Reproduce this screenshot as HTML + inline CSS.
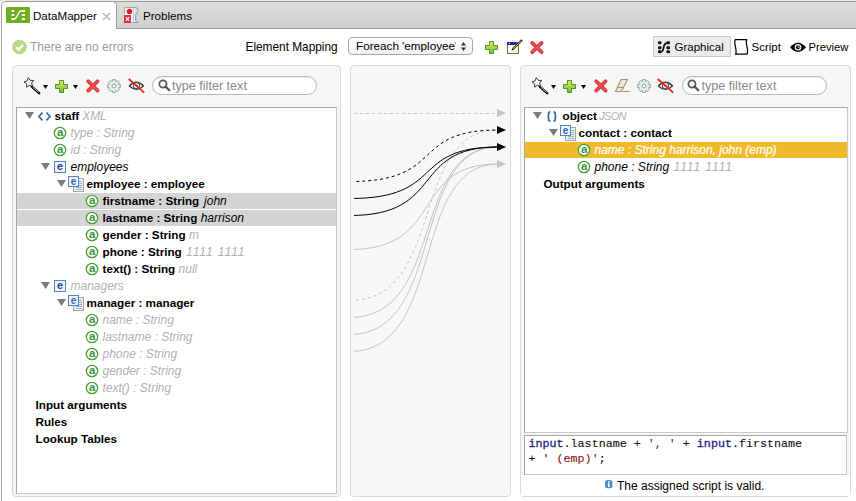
<!DOCTYPE html>
<html><head><meta charset="utf-8">
<style>
*{margin:0;padding:0;box-sizing:border-box}
html,body{width:856px;height:501px;overflow:hidden;background:#fff;font-family:"Liberation Sans",sans-serif;color:#000}
.a{position:absolute}
.t{position:absolute;white-space:pre;font-size:11.7px;line-height:17px}
.b{font-weight:bold}
.i{font-style:italic;font-size:12px}
.g{color:#b0b0b0}
svg{position:absolute;overflow:visible}
</style></head><body>

<!-- tab bar -->
<div class="a" style="left:0;top:0;width:856px;height:1px;background:#ececec"></div>
<div class="a" style="left:6px;top:1px;width:850px;height:28px;background:linear-gradient(#dedede,#cfcfcf);border-top:1px solid #9c9c9c;border-bottom:1px solid #9c9c9c"></div>
<!-- active tab -->
<div class="a" style="left:1px;top:1px;width:116px;height:28px;background:#fff;border:1px solid #9c9c9c;border-bottom:none;border-radius:5px 5px 0 0"></div>
<!-- window left border -->
<div class="a" style="left:1px;top:20px;width:1px;height:481px;background:#a4a4a4"></div>


<!-- DataMapper icon -->
<svg style="left:6px;top:7px" width="24" height="16" viewBox="0 0 24 16">
<rect x="0" y="0" width="24" height="16" rx="1.2" fill="#6db01f"/>
<g fill="#fff"><rect x="5.5" y="3" width="2.8" height="2" rx="0.6"/><rect x="5.5" y="7" width="2.8" height="2" rx="0.6"/><rect x="5.5" y="11" width="2.8" height="2" rx="0.6"/>
<rect x="15.8" y="3" width="3.2" height="2" rx="0.6"/><rect x="15.8" y="7" width="3.2" height="2" rx="0.6"/><rect x="15.8" y="11" width="3.2" height="2" rx="0.6"/></g>
<path d="M5.8 11.8 H8.3 Q9.5 11.8 10.3 10.3 L13.3 5 Q13.9 4 15.5 4 H19" stroke="#fff" stroke-width="1.4" fill="none"/>
</svg>
<div class="t" style="left:33px;top:7px;font-size:11.6px">DataMapper</div>
<svg style="left:102px;top:12px" width="9" height="9" viewBox="0 0 9 9"><path d="M1 1L8 8M8 1L1 8" stroke="#b9b9b9" stroke-width="1.6"/></svg>

<!-- Problems icon -->
<svg style="left:123px;top:6px" width="17" height="18" viewBox="0 0 17 18">
<rect x="1" y="1" width="11" height="15" fill="#eef4fb"/>
<path d="M1.5 8 V1.5 H9" stroke="#b4a878" stroke-width="1" fill="none"/>
<path d="M9 1.5 H12.5 Q15 1.5 15 4.5 Q15 7.5 12.8 8 V14.5 Q13 16.5 15.5 16.5 H9" stroke="#8898c0" stroke-width="1" fill="none"/>
<path d="M10.5 2 V16" stroke="#b8c8e4" stroke-width="1"/>
<circle cx="6.5" cy="5.5" r="2.7" fill="#e01c2c"/>
<rect x="1" y="9" width="7" height="8" fill="#de3040"/>
<path d="M2.8 11.2 L6.2 14.8 M6.2 11.2 L2.8 14.8" stroke="#fff" stroke-width="1.2"/>
</svg>
<div class="t" style="left:143px;top:7px;font-size:11.6px">Problems</div>

<!-- status row -->
<svg style="left:12px;top:40px" width="15" height="15" viewBox="0 0 15 15">
<circle cx="7.5" cy="7" r="6.8" fill="#b9da88" stroke="#a6cf7c" stroke-width="0.8"/>
<path d="M4 7.2 L6.6 9.6 L11 5" stroke="#fff" stroke-width="2.2" fill="none"/>
</svg>
<div class="t" style="left:30px;top:39px;font-size:12px;color:#9a9a9a">There are no errors</div>
<div class="t" style="left:245.5px;top:39px;font-size:11.85px">Element Mapping</div>

<!-- combo -->
<div class="a" style="left:348px;top:37px;width:125px;height:18px;border:1px solid #a9a9a9;border-radius:4px;background:linear-gradient(#ffffff,#f0f0f0)"></div>
<div class="t" style="left:356px;top:37px;font-size:11.7px;width:100px;overflow:hidden">Foreach 'employee'</div>
<svg style="left:461px;top:42px" width="5" height="9" viewBox="0 0 5 9"><path d="M0 3.5 L2.5 0 L5 3.5Z M0 5.5 L2.5 9 L5 5.5Z" fill="#333"/></svg>

<!-- plus -->
<svg style="left:485px;top:41px" width="13" height="13" viewBox="0 0 13 13">
<defs><linearGradient id="gp" x1="0" y1="0" x2="0" y2="1"><stop offset="0" stop-color="#e8ea5a"/><stop offset="1" stop-color="#6cc030"/></linearGradient></defs>
<path d="M4.5 0.5 H8.5 V4.5 H12.5 V8.5 H8.5 V12.5 H4.5 V8.5 H0.5 V4.5 H4.5Z" fill="url(#gp)" stroke="#4f9040" stroke-width="1"/>
</svg>
<!-- edit -->
<svg style="left:506px;top:39px" width="17" height="16" viewBox="0 0 17 16">
<defs><linearGradient id="tb" x1="0" y1="0" x2="1" y2="0"><stop offset="0" stop-color="#101a90"/><stop offset="0.7" stop-color="#1830a8"/><stop offset="1" stop-color="#40a0e0"/></linearGradient></defs>
<rect x="1.5" y="3.5" width="11" height="11" fill="#fbfbe4" stroke="#6a6a6a"/>
<rect x="1" y="3" width="12" height="3" fill="url(#tb)"/>
<circle cx="3.3" cy="4.5" r="0.7" fill="#fff"/>
<path d="M6.8 10.3 L15.5 1.6" stroke="#3a2a10" stroke-width="2.1" stroke-linecap="round"/>
<path d="M7.1 10 L15.2 1.9" stroke="#f0a838" stroke-width="1"/>
</svg>
<!-- red x -->
<svg style="left:530px;top:41px" width="14" height="13" viewBox="0 0 14 13">
<path d="M2.2 1.9 L11.6 11.1 M11.6 1.9 L2.2 11.1" stroke="#d83434" stroke-width="3.7" stroke-linecap="round"/>
<path d="M2.2 1.9 L11.6 11.1 M11.6 1.9 L2.2 11.1" stroke="#ea5454" stroke-width="1.6" stroke-linecap="round"/>
</svg>

<!-- Graphical button -->
<div class="a" style="left:653px;top:36px;width:78px;height:21px;background:#ebebeb;border:1px solid #c9c9c9"></div>
<svg style="left:657px;top:40px" width="14" height="14" viewBox="0 0 14 14">
<rect x="1" y="1.3" width="3.4" height="3" rx="1" fill="#111"/><rect x="1" y="6.3" width="3.4" height="3" rx="1" fill="#111"/><rect x="1" y="10.3" width="3.4" height="3" rx="1" fill="#111"/>
<rect x="9.5" y="1.3" width="3.5" height="3" rx="1" fill="#111"/><rect x="9.5" y="6.3" width="3.5" height="3" rx="1" fill="#111"/><rect x="9.5" y="10.3" width="3.5" height="3" rx="1" fill="#111"/>
<path d="M3 12 Q6 12 6.5 8 Q7.2 3 10.5 2.8" stroke="#111" stroke-width="1.8" fill="none"/>
</svg>
<div class="t" style="left:674.5px;top:39px;font-size:11.5px">Graphical</div>
<svg style="left:733px;top:38px" width="16" height="18" viewBox="0 0 16 18">
<path d="M2.3 1.6 H13.8 C11.6 5 16.4 12 14 16.2 H2.6 C4.8 12 0 5 2.3 1.6Z" fill="#fff" stroke="#000" stroke-width="1.25" stroke-linejoin="round"/>
</svg>
<div class="t" style="left:751.5px;top:39px;font-size:11.5px">Script</div>
<svg style="left:789px;top:41px" width="18" height="13" viewBox="0 0 18 13">
<path d="M1 6.3 Q9 -3 17 6.3 Q9 15.6 1 6.3Z" fill="#000"/>
<circle cx="9" cy="6.3" r="3.3" fill="#fff"/>
<circle cx="9" cy="6.3" r="2.1" fill="#000"/>
<path d="M9 6.3 V4.2 M9 6.3 H11" stroke="#fff" stroke-width="0.6"/>
</svg>
<div class="t" style="left:808.5px;top:39px;font-size:11.2px">Preview</div>

<!-- panels -->
<div class="a" style="left:12px;top:65px;width:329px;height:432px;background:#f6f6f6;border:1px solid #dadada;border-radius:4px"></div>
<div class="a" style="left:350px;top:65px;width:161px;height:432px;background:#f7f7f7;border:1px solid #dadada;border-radius:4px"></div>
<div class="a" style="left:520px;top:65px;width:331px;height:432px;background:#f6f6f6;border:1px solid #dadada;border-radius:4px"></div>


<!-- tree boxes -->
<div class="a" style="left:16px;top:107px;width:321px;height:387px;background:#fff;border:1px solid #a6a6a6;border-right-color:#c8c8c8;border-bottom-color:#c8c8c8"></div>
<div class="a" style="left:524px;top:107px;width:324px;height:326px;background:#fff;border:1px solid #a6a6a6;border-right-color:#c8c8c8;border-bottom-color:#c8c8c8"></div>
<div class="a" style="left:524px;top:435px;width:323px;height:40px;background:#fff;border:1px solid #a6a6a6;border-right-color:#c8c8c8;border-bottom-color:#c8c8c8"></div>
<div class="a" style="left:521px;top:475px;width:329px;height:21px;background:#fff"></div>

<svg style="left:24px;top:78px" width="18" height="17" viewBox="0 0 18 17"><path d="M7.8 8.6 L15.3 15.3" stroke="#000" stroke-width="2.3" stroke-linecap="round"/><path d="M8.6 9 L14.6 14.4" stroke="#fff" stroke-width="0.7"/><path d="M4.24 -0.34 L6.20 2.39 L9.56 2.42 L7.57 5.12 L8.58 8.33 L5.39 7.27 L2.65 9.23 L2.68 5.86 L-0.03 3.87 L3.17 2.85Z" fill="#fff" stroke="#222" stroke-width="0.9" stroke-linejoin="round"/></svg>
<svg style="left:43px;top:85px" width="5" height="4" viewBox="0 0 5 4"><path d="M0 0H5L2.5 4Z" fill="#000"/></svg>
<svg style="left:55px;top:80px" width="13" height="13" viewBox="0 0 13 13"><path d="M4.5 0.5 H8.5 V4.5 H12.5 V8.5 H8.5 V12.5 H4.5 V8.5 H0.5 V4.5 H4.5Z" fill="url(#gp)" stroke="#4f9040" stroke-width="1"/></svg>
<svg style="left:73px;top:85px" width="5" height="4" viewBox="0 0 5 4"><path d="M0 0H5L2.5 4Z" fill="#000"/></svg>
<svg style="left:86px;top:79px" width="14" height="14" viewBox="0 0 14 14"><path d="M2.2 2.2 L11.6 11.6 M11.6 2.2 L2.2 11.6" stroke="#d83434" stroke-width="3.7" stroke-linecap="round"/><path d="M2.2 2.2 L11.6 11.6 M11.6 2.2 L2.2 11.6" stroke="#ea5454" stroke-width="1.6" stroke-linecap="round"/></svg>
<svg style="left:107px;top:79px" width="14" height="14" viewBox="0 0 14 14"><path d="M13.46 5.62 L13.46 8.38 L11.59 8.73 L11.46 9.02 L12.54 10.59 L10.59 12.54 L9.02 11.46 L8.73 11.59 L8.38 13.46 L5.62 13.46 L5.27 11.59 L4.98 11.46 L3.41 12.54 L1.46 10.59 L2.54 9.02 L2.41 8.73 L0.54 8.38 L0.54 5.62 L2.41 5.27 L2.54 4.98 L1.46 3.41 L3.41 1.46 L4.98 2.54 L5.27 2.41 L5.62 0.54 L8.38 0.54 L8.73 2.41 L9.02 2.54 L10.59 1.46 L12.54 3.41 L11.46 4.98 L11.59 5.27Z" fill="#e2eced" stroke="#8c9c9c" stroke-width="0.9" stroke-linejoin="round"/><circle cx="7" cy="7" r="1.9" fill="#f7f7f7" stroke="#8c9c9c" stroke-width="0.9"/></svg>
<svg style="left:127.5px;top:78px" width="17" height="16" viewBox="0 0 17 16"><path d="M1.2 8 Q8.3 0.6 15.6 8" fill="none" stroke="#3a3a3a" stroke-width="1.5"/><path d="M1.2 8 Q8.3 14.6 15.6 8" fill="none" stroke="#3a3a3a" stroke-width="1.1"/><circle cx="8.4" cy="7.6" r="3.1" fill="none" stroke="#555" stroke-width="1.1"/><circle cx="8.4" cy="7.6" r="1.2" fill="#777"/><path d="M0.8 1 L16.2 14.6" stroke="#e8231d" stroke-width="1.7"/></svg>
<div class="a" style="left:152px;top:76px;width:165px;height:19px;border:1px solid #b9b9b9;border-radius:10px;background:#fff;box-shadow:inset 0 1px 1px rgba(0,0,0,0.08)"></div>
<svg style="left:157.5px;top:79px" width="13" height="13" viewBox="0 0 13 13"><circle cx="5" cy="5" r="3.6" fill="none" stroke="#555" stroke-width="1.7"/><path d="M7.6 7.6 L11.3 11.3" stroke="#555" stroke-width="2.2" stroke-linecap="round"/></svg>
<div class="t" style="left:172px;top:78px;font-size:12.6px;color:#8a8a8a">type filter text</div>
<svg style="left:532px;top:78px" width="18" height="17" viewBox="0 0 18 17"><path d="M7.8 8.6 L15.3 15.3" stroke="#000" stroke-width="2.3" stroke-linecap="round"/><path d="M8.6 9 L14.6 14.4" stroke="#fff" stroke-width="0.7"/><path d="M4.24 -0.34 L6.20 2.39 L9.56 2.42 L7.57 5.12 L8.58 8.33 L5.39 7.27 L2.65 9.23 L2.68 5.86 L-0.03 3.87 L3.17 2.85Z" fill="#fff" stroke="#222" stroke-width="0.9" stroke-linejoin="round"/></svg>
<svg style="left:551px;top:85px" width="5" height="4" viewBox="0 0 5 4"><path d="M0 0H5L2.5 4Z" fill="#000"/></svg>
<svg style="left:563px;top:80px" width="13" height="13" viewBox="0 0 13 13"><path d="M4.5 0.5 H8.5 V4.5 H12.5 V8.5 H8.5 V12.5 H4.5 V8.5 H0.5 V4.5 H4.5Z" fill="url(#gp)" stroke="#4f9040" stroke-width="1"/></svg>
<svg style="left:581px;top:85px" width="5" height="4" viewBox="0 0 5 4"><path d="M0 0H5L2.5 4Z" fill="#000"/></svg>
<svg style="left:594px;top:79px" width="14" height="14" viewBox="0 0 14 14"><path d="M2.2 2.2 L11.6 11.6 M11.6 2.2 L2.2 11.6" stroke="#d83434" stroke-width="3.7" stroke-linecap="round"/><path d="M2.2 2.2 L11.6 11.6 M11.6 2.2 L2.2 11.6" stroke="#ea5454" stroke-width="1.6" stroke-linecap="round"/></svg>
<svg style="left:614px;top:78px" width="17" height="16" viewBox="0 0 17 16"><path d="M7 1.5 H13.5 L7.5 13.5 H1.5Z" fill="#efe6da" stroke="#a89070" stroke-width="1.1"/><path d="M3 9.5 H9.5" stroke="#a89070" stroke-width="1"/><path d="M9 13.5 H15.5" stroke="#a89070" stroke-width="1.1"/></svg>
<svg style="left:636.5px;top:79px" width="14" height="14" viewBox="0 0 14 14"><path d="M13.46 5.62 L13.46 8.38 L11.59 8.73 L11.46 9.02 L12.54 10.59 L10.59 12.54 L9.02 11.46 L8.73 11.59 L8.38 13.46 L5.62 13.46 L5.27 11.59 L4.98 11.46 L3.41 12.54 L1.46 10.59 L2.54 9.02 L2.41 8.73 L0.54 8.38 L0.54 5.62 L2.41 5.27 L2.54 4.98 L1.46 3.41 L3.41 1.46 L4.98 2.54 L5.27 2.41 L5.62 0.54 L8.38 0.54 L8.73 2.41 L9.02 2.54 L10.59 1.46 L12.54 3.41 L11.46 4.98 L11.59 5.27Z" fill="#e2eced" stroke="#8c9c9c" stroke-width="0.9" stroke-linejoin="round"/><circle cx="7" cy="7" r="1.9" fill="#f7f7f7" stroke="#8c9c9c" stroke-width="0.9"/></svg>
<svg style="left:657.0px;top:78px" width="17" height="16" viewBox="0 0 17 16"><path d="M1.2 8 Q8.3 0.6 15.6 8" fill="none" stroke="#3a3a3a" stroke-width="1.5"/><path d="M1.2 8 Q8.3 14.6 15.6 8" fill="none" stroke="#3a3a3a" stroke-width="1.1"/><circle cx="8.4" cy="7.6" r="3.1" fill="none" stroke="#555" stroke-width="1.1"/><circle cx="8.4" cy="7.6" r="1.2" fill="#777"/><path d="M0.8 1 L16.2 14.6" stroke="#e8231d" stroke-width="1.7"/></svg>
<div class="a" style="left:681.5px;top:76px;width:145px;height:19px;border:1px solid #b9b9b9;border-radius:10px;background:#fff;box-shadow:inset 0 1px 1px rgba(0,0,0,0.08)"></div>
<svg style="left:687.0px;top:79px" width="13" height="13" viewBox="0 0 13 13"><circle cx="5" cy="5" r="3.6" fill="none" stroke="#555" stroke-width="1.7"/><path d="M7.6 7.6 L11.3 11.3" stroke="#555" stroke-width="2.2" stroke-linecap="round"/></svg>
<div class="t" style="left:701.5px;top:78px;font-size:12.6px;color:#8a8a8a">type filter text</div>
<div class="a" style="left:17px;top:193px;width:319px;height:16px;background:#d4d4d4"></div>
<div class="a" style="left:17px;top:210px;width:319px;height:16px;background:#d4d4d4"></div>
<svg style="left:25px;top:112px" width="9" height="7" viewBox="0 0 9 7"><path d="M0 0 H9 L4.5 7Z" fill="#7b7b7b"/></svg>
<svg style="left:38px;top:112px" width="13" height="9" viewBox="0 0 13 9"><path d="M4.5 0.7 L1 4.5 L4.5 8.3 M8.5 0.7 L12 4.5 L8.5 8.3" stroke="#2f6e9e" stroke-width="1.7" fill="none"/></svg>
<div class="t" style="left:54.5px;top:107px;"><span class="b" style="">staff</span><span class="i g" style="letter-spacing:-0.15px"> XML</span></div>
<svg style="left:53.3px;top:125.69999999999999px" width="14" height="14" viewBox="0 0 14 14"><circle cx="7" cy="7" r="5.7" fill="#fff" stroke="#45a23a" stroke-width="1.3"/><text x="7.1" y="10.3" text-anchor="middle" font-family="Liberation Sans" font-weight="bold" font-size="11.5" fill="#3c9630">a</text></svg>
<div class="t" style="left:70.5px;top:124px;"><span class="i g" style="">type : String</span></div>
<svg style="left:53.3px;top:142.7px" width="14" height="14" viewBox="0 0 14 14"><circle cx="7" cy="7" r="5.7" fill="#fff" stroke="#45a23a" stroke-width="1.3"/><text x="7.1" y="10.3" text-anchor="middle" font-family="Liberation Sans" font-weight="bold" font-size="11.5" fill="#3c9630">a</text></svg>
<div class="t" style="left:70.5px;top:141px;"><span class="i g" style="">id : String</span></div>
<svg style="left:41px;top:163px" width="9" height="7" viewBox="0 0 9 7"><path d="M0 0 H9 L4.5 7Z" fill="#7b7b7b"/></svg>
<svg style="left:54px;top:161px" width="12" height="12" viewBox="0 0 12 12"><rect x="0.5" y="0.5" width="11" height="11" fill="#eef6fd" stroke="#4f86c2" stroke-width="1"/><text x="6" y="9.3" text-anchor="middle" font-family="Liberation Sans" font-weight="bold" font-size="11" fill="#2b3b98">e</text></svg>
<div class="t" style="left:70.5px;top:158px;"><span class="i" style="">employees</span></div>
<svg style="left:57px;top:180px" width="9" height="7" viewBox="0 0 9 7"><path d="M0 0 H9 L4.5 7Z" fill="#7b7b7b"/></svg>
<svg style="left:68px;top:176px" width="16" height="16" viewBox="0 0 16 16"><rect x="5.5" y="2.5" width="10" height="13" fill="#e8eefa" stroke="#b0a888" stroke-width="1"/><path d="M8 5.5H14M8 7.5H14M8 9.5H14M8 11.5H14M8 13.5H14" stroke="#8aa4d8" stroke-width="0.8"/><rect x="0.5" y="0.5" width="10" height="10" fill="#eef6fd" stroke="#4f86c2" stroke-width="1"/><text x="5.5" y="8.6" text-anchor="middle" font-family="Liberation Sans" font-weight="bold" font-size="10" fill="#4062a8">e</text></svg>
<div class="t" style="left:86.5px;top:175px;"><span class="b" style="">employee : employee</span></div>
<svg style="left:85.3px;top:193.7px" width="14" height="14" viewBox="0 0 14 14"><circle cx="7" cy="7" r="5.7" fill="#fff" stroke="#45a23a" stroke-width="1.3"/><text x="7.1" y="10.3" text-anchor="middle" font-family="Liberation Sans" font-weight="bold" font-size="11.5" fill="#3c9630">a</text></svg>
<div class="t" style="left:102.5px;top:192px;"><span class="b" style="">firstname : String</span><span class="i" style="margin-left:1.5px"> john</span></div>
<svg style="left:85.3px;top:210.7px" width="14" height="14" viewBox="0 0 14 14"><circle cx="7" cy="7" r="5.7" fill="#fff" stroke="#45a23a" stroke-width="1.3"/><text x="7.1" y="10.3" text-anchor="middle" font-family="Liberation Sans" font-weight="bold" font-size="11.5" fill="#3c9630">a</text></svg>
<div class="t" style="left:102.5px;top:209px;"><span class="b" style="">lastname : String</span><span class="i" style=""> harrison</span></div>
<svg style="left:85.3px;top:227.7px" width="14" height="14" viewBox="0 0 14 14"><circle cx="7" cy="7" r="5.7" fill="#fff" stroke="#45a23a" stroke-width="1.3"/><text x="7.1" y="10.3" text-anchor="middle" font-family="Liberation Sans" font-weight="bold" font-size="11.5" fill="#3c9630">a</text></svg>
<div class="t" style="left:102.5px;top:226px;"><span class="b" style="">gender : String</span><span class="i g" style=""> m</span></div>
<svg style="left:85.3px;top:244.7px" width="14" height="14" viewBox="0 0 14 14"><circle cx="7" cy="7" r="5.7" fill="#fff" stroke="#45a23a" stroke-width="1.3"/><text x="7.1" y="10.3" text-anchor="middle" font-family="Liberation Sans" font-weight="bold" font-size="11.5" fill="#3c9630">a</text></svg>
<div class="t" style="left:102.5px;top:243px;"><span class="b" style="">phone : String</span><span class="i g" style="letter-spacing:0.9px"> 1111 1111</span></div>
<svg style="left:85.3px;top:261.7px" width="14" height="14" viewBox="0 0 14 14"><circle cx="7" cy="7" r="5.7" fill="#fff" stroke="#45a23a" stroke-width="1.3"/><text x="7.1" y="10.3" text-anchor="middle" font-family="Liberation Sans" font-weight="bold" font-size="11.5" fill="#3c9630">a</text></svg>
<div class="t" style="left:102.5px;top:260px;"><span class="b" style="">text() : String</span><span class="i g" style=""> null</span></div>
<svg style="left:41px;top:282px" width="9" height="7" viewBox="0 0 9 7"><path d="M0 0 H9 L4.5 7Z" fill="#7b7b7b"/></svg>
<svg style="left:54px;top:280px" width="12" height="12" viewBox="0 0 12 12"><rect x="0.5" y="0.5" width="11" height="11" fill="#eef6fd" stroke="#4f86c2" stroke-width="1"/><text x="6" y="9.3" text-anchor="middle" font-family="Liberation Sans" font-weight="bold" font-size="11" fill="#2b3b98">e</text></svg>
<div class="t" style="left:70.5px;top:277px;"><span class="i g" style="">managers</span></div>
<svg style="left:57px;top:299px" width="9" height="7" viewBox="0 0 9 7"><path d="M0 0 H9 L4.5 7Z" fill="#7b7b7b"/></svg>
<svg style="left:68px;top:295px" width="16" height="16" viewBox="0 0 16 16"><rect x="5.5" y="2.5" width="10" height="13" fill="#e8eefa" stroke="#b0a888" stroke-width="1"/><path d="M8 5.5H14M8 7.5H14M8 9.5H14M8 11.5H14M8 13.5H14" stroke="#8aa4d8" stroke-width="0.8"/><rect x="0.5" y="0.5" width="10" height="10" fill="#eef6fd" stroke="#4f86c2" stroke-width="1"/><text x="5.5" y="8.6" text-anchor="middle" font-family="Liberation Sans" font-weight="bold" font-size="10" fill="#4062a8">e</text></svg>
<div class="t" style="left:86.5px;top:294px;"><span class="b" style="">manager : manager</span></div>
<svg style="left:85.3px;top:312.7px" width="14" height="14" viewBox="0 0 14 14"><circle cx="7" cy="7" r="5.7" fill="#fff" stroke="#45a23a" stroke-width="1.3"/><text x="7.1" y="10.3" text-anchor="middle" font-family="Liberation Sans" font-weight="bold" font-size="11.5" fill="#3c9630">a</text></svg>
<div class="t" style="left:102.5px;top:311px;"><span class="i g" style="">name : String</span></div>
<svg style="left:85.3px;top:329.7px" width="14" height="14" viewBox="0 0 14 14"><circle cx="7" cy="7" r="5.7" fill="#fff" stroke="#45a23a" stroke-width="1.3"/><text x="7.1" y="10.3" text-anchor="middle" font-family="Liberation Sans" font-weight="bold" font-size="11.5" fill="#3c9630">a</text></svg>
<div class="t" style="left:102.5px;top:328px;"><span class="i g" style="">lastname : String</span></div>
<svg style="left:85.3px;top:346.7px" width="14" height="14" viewBox="0 0 14 14"><circle cx="7" cy="7" r="5.7" fill="#fff" stroke="#45a23a" stroke-width="1.3"/><text x="7.1" y="10.3" text-anchor="middle" font-family="Liberation Sans" font-weight="bold" font-size="11.5" fill="#3c9630">a</text></svg>
<div class="t" style="left:102.5px;top:345px;"><span class="i g" style="">phone : String</span></div>
<svg style="left:85.3px;top:363.7px" width="14" height="14" viewBox="0 0 14 14"><circle cx="7" cy="7" r="5.7" fill="#fff" stroke="#45a23a" stroke-width="1.3"/><text x="7.1" y="10.3" text-anchor="middle" font-family="Liberation Sans" font-weight="bold" font-size="11.5" fill="#3c9630">a</text></svg>
<div class="t" style="left:102.5px;top:362px;"><span class="i g" style="">gender : String</span></div>
<svg style="left:85.3px;top:380.7px" width="14" height="14" viewBox="0 0 14 14"><circle cx="7" cy="7" r="5.7" fill="#fff" stroke="#45a23a" stroke-width="1.3"/><text x="7.1" y="10.3" text-anchor="middle" font-family="Liberation Sans" font-weight="bold" font-size="11.5" fill="#3c9630">a</text></svg>
<div class="t" style="left:102.5px;top:379px;"><span class="i g" style="">text() : String</span></div>
<div class="t" style="left:35.5px;top:396px;"><span class="b" style="">Input arguments</span></div>
<div class="t" style="left:35.5px;top:413px;"><span class="b" style="">Rules</span></div>
<div class="t" style="left:35.5px;top:430px;"><span class="b" style="">Lookup Tables</span></div>
<div class="a" style="left:525px;top:142px;width:322px;height:16px;background:#efbb2d"></div>
<svg style="left:533px;top:112px" width="9" height="7" viewBox="0 0 9 7"><path d="M0 0 H9 L4.5 7Z" fill="#7b7b7b"/></svg>
<svg style="left:547px;top:111px" width="10" height="11" viewBox="0 0 10 11"><path d="M3.3 0.8 Q1.6 0.8 1.6 2.6 V3.8 Q1.6 5.3 0.4 5.3 Q1.6 5.3 1.6 6.8 V8.2 Q1.6 10 3.3 10 M6.5 0.8 Q8.2 0.8 8.2 2.6 V3.8 Q8.2 5.3 9.4 5.3 Q8.2 5.3 8.2 6.8 V8.2 Q8.2 10 6.5 10" stroke="#2f6e9e" stroke-width="1.8" fill="none"/></svg>
<div class="t" style="left:562.5px;top:107px;"><span class="b" style="">object</span><span class="i g" style="font-size:11px;letter-spacing:-0.7px"> JSON</span></div>
<svg style="left:549px;top:129px" width="9" height="7" viewBox="0 0 9 7"><path d="M0 0 H9 L4.5 7Z" fill="#7b7b7b"/></svg>
<svg style="left:560px;top:125px" width="16" height="16" viewBox="0 0 16 16"><rect x="5.5" y="2.5" width="10" height="13" fill="#e8eefa" stroke="#b0a888" stroke-width="1"/><path d="M8 5.5H14M8 7.5H14M8 9.5H14M8 11.5H14M8 13.5H14" stroke="#8aa4d8" stroke-width="0.8"/><rect x="0.5" y="0.5" width="10" height="10" fill="#eef6fd" stroke="#4f86c2" stroke-width="1"/><text x="5.5" y="8.6" text-anchor="middle" font-family="Liberation Sans" font-weight="bold" font-size="10" fill="#4062a8">e</text></svg>
<div class="t" style="left:578.5px;top:124px;"><span class="b" style="">contact : contact</span></div>
<svg style="left:577.3px;top:142.7px" width="14" height="14" viewBox="0 0 14 14"><circle cx="7" cy="7" r="5.7" fill="#fff" stroke="#45a23a" stroke-width="1.3"/><text x="7.1" y="10.3" text-anchor="middle" font-family="Liberation Sans" font-weight="bold" font-size="11.5" fill="#3c9630">a</text></svg>
<div class="t" style="left:594.5px;top:141px;"><span class="i" style="color:#fff;-webkit-text-stroke:0.2px #fff">name : String harrison, john (emp)</span></div>
<svg style="left:577.3px;top:159.7px" width="14" height="14" viewBox="0 0 14 14"><circle cx="7" cy="7" r="5.7" fill="#fff" stroke="#45a23a" stroke-width="1.3"/><text x="7.1" y="10.3" text-anchor="middle" font-family="Liberation Sans" font-weight="bold" font-size="11.5" fill="#3c9630">a</text></svg>
<div class="t" style="left:594.5px;top:158px;"><span class="i" style="">phone : String</span><span class="i g" style="letter-spacing:0.9px"> 1111 1111</span></div>
<div class="t" style="left:543.5px;top:175px;"><span class="b" style="">Output arguments</span></div>
<div class="a" style="left:528.5px;top:437px;font-family:'Liberation Mono',monospace;font-size:11.7px;line-height:15px;white-space:pre;color:#111;-webkit-text-stroke:0.1px"><span style="color:#23237e;-webkit-text-stroke:0.3px #23237e">input</span>.lastname + <span style="color:#7e1616">', '</span> + <span style="color:#23237e;-webkit-text-stroke:0.3px #23237e">input</span>.firstname
+ <span style="color:#7e1616">' (emp)'</span>;</div><svg style="left:605px;top:480px" width="8" height="9" viewBox="0 0 8 9"><rect x="0" y="0" width="7.5" height="8.3" rx="2.5" fill="#4f8cca"/><path d="M3.75 3.3 V7" stroke="#fff" stroke-width="1.6"/><circle cx="3.75" cy="1.8" r="0.9" fill="#fff"/></svg><div class="t" style="left:617px;top:478px;font-size:12px">The assigned script is valid.</div>
<div class="a" style="left:354px;top:66px;width:157px;height:430px;overflow:hidden"><svg style="left:-354px;top:-66px" width="856" height="501" viewBox="0 0 856 501"><path d="M354 113.5 H498" stroke="#c4c4c4" stroke-width="1" stroke-dasharray="3 3"/>
<path d="M350 249.5 C446.2 249.5 409.2 164 498 164" stroke="#c4c4c4" stroke-width="1.0" fill="none"/>
<path d="M350 300.5 C446.2 300.5 409.2 130 498 130" stroke="#c4c4c4" stroke-width="1.0" fill="none" stroke-dasharray="3 3"/>
<path d="M350 317.5 C446.2 317.5 409.2 147 498 147" stroke="#c4c4c4" stroke-width="1.0" fill="none"/>
<path d="M350 334.5 C446.2 334.5 409.2 147 498 147" stroke="#c4c4c4" stroke-width="1.0" fill="none"/>
<path d="M350 351.5 C446.2 351.5 409.2 164 498 164" stroke="#c4c4c4" stroke-width="1.0" fill="none"/>
<path d="M350 181.5 C446.2 181.5 409.2 130 498 130" stroke="#000" stroke-width="1.0" fill="none" stroke-dasharray="3 3"/>
<path d="M350 198.5 C446.2 198.5 409.2 147 498 147" stroke="#000" stroke-width="1.0" fill="none"/>
<path d="M350 215.5 C446.2 215.5 409.2 147 498 147" stroke="#000" stroke-width="1.0" fill="none"/>
<path d="M497 109 L506 113 L497 117Z" fill="#c4c4c4"/>
<path d="M497 126 L506 130 L497 134Z" fill="#000"/>
<path d="M497 143 L506 147 L497 151Z" fill="#000"/>
<path d="M497 160 L506 164 L497 168Z" fill="#c4c4c4"/></svg></div>
</body></html>
